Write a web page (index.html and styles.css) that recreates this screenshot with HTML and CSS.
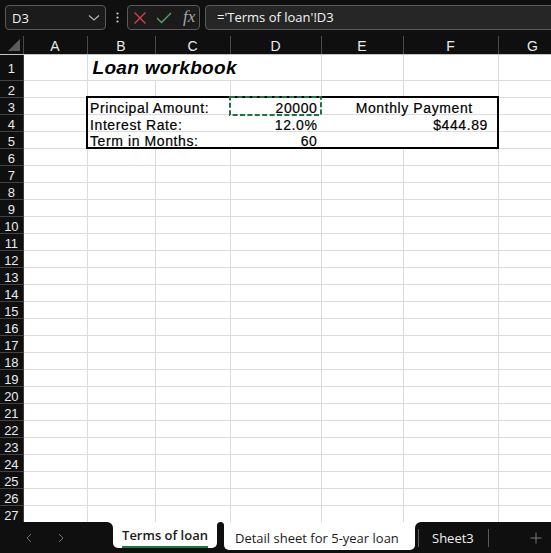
FILE: index.html
```html
<!DOCTYPE html>
<html>
<head>
<meta charset="utf-8">
<title>Loan workbook</title>
<link rel="stylesheet" href="styles.css">
</head>
<body>
<div class="app">
  <div class="toolbar">
    <div class="namebox">
      <span>D3</span>
      <svg class="chev" width="12" height="8" viewBox="0 0 12 8"><polyline points="1,1.5 6,6 11,1.5" fill="none" stroke="#b5b5b5" stroke-width="1.2"/></svg>
    </div>
    <div class="kebab">
      <svg width="21" height="25" viewBox="0 0 21 25"><circle cx="11.5" cy="8.5" r="1.1" fill="#d0d0d0"/><circle cx="11.5" cy="12.5" r="1.1" fill="#d0d0d0"/><circle cx="11.5" cy="16.5" r="1.1" fill="#d0d0d0"/></svg>
    </div>
    <div class="fxbox">
      <svg class="ico-x" width="14" height="14" viewBox="0 0 14 14"><path d="M1.5 1.5 L12.5 12.5 M12.5 1.5 L1.5 12.5" stroke="#d9414a" stroke-width="1.3" fill="none"/></svg>
      <svg class="ico-ok" width="16" height="12" viewBox="0 0 16 12"><polyline points="1,6 5.5,10.5 15,1" fill="none" stroke="#4fa866" stroke-width="1.3"/></svg>
      <span class="fx">fx</span>
    </div>
    <div class="formula">='Terms of loan'!D3</div>
  </div>

  <div class="gridwrap">
    <table class="sheet">
      <colgroup>
        <col class="w-rh"><col class="w-a"><col class="w-b"><col class="w-c"><col class="w-d"><col class="w-e"><col class="w-f"><col class="w-g">
      </colgroup>
      <thead>
        <tr class="hrow">
          <th class="corner"><svg width="22" height="17" viewBox="0 0 22 17"><polygon points="20,3 20,15 8,15" fill="#5c5c5c"/></svg></th>
          <th>A</th><th>B</th><th>C</th><th>D</th><th>E</th><th>F</th><th>G</th>
        </tr>
      </thead>
      <tbody>
        <tr class="r1"><th>1</th><td></td><td class="title nr">Loan workbook</td><td class="nr"></td><td></td><td></td><td></td><td></td></tr>
        <tr><th>2</th><td></td><td></td><td></td><td></td><td></td><td></td><td></td></tr>
        <tr><th>3</th><td></td><td class="bl bt nr">Principal Amount:</td><td class="bt nr"></td><td class="bt num nr sel">20000<svg class="ants" width="93" height="20" viewBox="0 0 93 20"><rect x="1" y="1" width="91" height="18" fill="none" stroke="#1f7244" stroke-width="2" stroke-dasharray="5 2.4"/></svg></td><td class="bt br ctr" colspan="2">Monthly Payment</td><td></td></tr>
        <tr><th>4</th><td></td><td class="bl nr">Interest Rate:</td><td class="nr"></td><td class="num nr">12.0%</td><td class="nr"></td><td class="num money br">$444.89</td><td></td></tr>
        <tr><th>5</th><td></td><td class="bl bb nr">Term in Months:</td><td class="bb nr"></td><td class="bb num nr">60</td><td class="bb nr"></td><td class="bb br"></td><td></td></tr>
        <tr><th>6</th><td></td><td></td><td></td><td></td><td></td><td></td><td></td></tr>
        <tr><th>7</th><td></td><td></td><td></td><td></td><td></td><td></td><td></td></tr>
        <tr><th>8</th><td></td><td></td><td></td><td></td><td></td><td></td><td></td></tr>
        <tr><th>9</th><td></td><td></td><td></td><td></td><td></td><td></td><td></td></tr>
        <tr><th>10</th><td></td><td></td><td></td><td></td><td></td><td></td><td></td></tr>
        <tr><th>11</th><td></td><td></td><td></td><td></td><td></td><td></td><td></td></tr>
        <tr><th>12</th><td></td><td></td><td></td><td></td><td></td><td></td><td></td></tr>
        <tr><th>13</th><td></td><td></td><td></td><td></td><td></td><td></td><td></td></tr>
        <tr><th>14</th><td></td><td></td><td></td><td></td><td></td><td></td><td></td></tr>
        <tr><th>15</th><td></td><td></td><td></td><td></td><td></td><td></td><td></td></tr>
        <tr><th>16</th><td></td><td></td><td></td><td></td><td></td><td></td><td></td></tr>
        <tr><th>17</th><td></td><td></td><td></td><td></td><td></td><td></td><td></td></tr>
        <tr><th>18</th><td></td><td></td><td></td><td></td><td></td><td></td><td></td></tr>
        <tr><th>19</th><td></td><td></td><td></td><td></td><td></td><td></td><td></td></tr>
        <tr><th>20</th><td></td><td></td><td></td><td></td><td></td><td></td><td></td></tr>
        <tr><th>21</th><td></td><td></td><td></td><td></td><td></td><td></td><td></td></tr>
        <tr><th>22</th><td></td><td></td><td></td><td></td><td></td><td></td><td></td></tr>
        <tr><th>23</th><td></td><td></td><td></td><td></td><td></td><td></td><td></td></tr>
        <tr><th>24</th><td></td><td></td><td></td><td></td><td></td><td></td><td></td></tr>
        <tr><th>25</th><td></td><td></td><td></td><td></td><td></td><td></td><td></td></tr>
        <tr><th>26</th><td></td><td></td><td></td><td></td><td></td><td></td><td></td></tr>
        <tr><th>27</th><td></td><td></td><td></td><td></td><td></td><td></td><td></td></tr>
      </tbody>
    </table>
  </div>

  <div class="tabbar">
    <div class="nav">
      <svg width="113" height="31" viewBox="0 0 113 31"><polyline points="31,12 27,16 31,20" fill="none" stroke="#707070" stroke-width="1"/><polyline points="59,12 63,16 59,20" fill="none" stroke="#707070" stroke-width="1"/></svg>
    </div>
    <div class="tab tab-active"><span class="tab-label">Terms of loan</span></div>
    <div class="tabgap"></div>
    <div class="tab tab-second">Detail sheet for 5-year loan</div>
    <div class="rest">
      <span class="vsep"></span>
      <span class="tab-dark">Sheet3</span>
      <span class="vsep"></span>
      <svg class="plus" width="12" height="12" viewBox="0 0 12 12"><path d="M6 0.5 V11.5 M0.5 6 H11.5" stroke="#7a7a7a" stroke-width="1" fill="none"/></svg>
    </div>
  </div>
</div>
</body>
</html>
```

FILE: styles.css
```css
* { box-sizing: border-box; }

html, body {
  margin: 0;
  padding: 0;
  background: #0f0f0f;
}

body {
  width: 551px;
  height: 553px;
  overflow: hidden;
}

.app {
  display: flex;
  flex-direction: column;
  width: 551px;
  height: 553px;
}

/* ---------- formula bar ---------- */
.toolbar {
  flex: none;
  height: 36px;
  display: flex;
  align-items: flex-start;
  padding: 5px 0 0 5px;
  background: #0f0f0f;
  font-family: "Open Sans", "Noto Sans", sans-serif;
  font-size: 13px;
  color: #f2f2f2;
}

.namebox {
  width: 101px;
  height: 25px;
  border: 1px solid #5a5a5a;
  border-radius: 4px;
  background: #1b1b1b;
  display: flex;
  align-items: center;
  justify-content: space-between;
  padding: 0 5px 0 6px;
}

.chev { display: block; margin-top: 1px; }

.kebab {
  width: 21px;
  height: 25px;
}
.kebab svg { display: block; }

.fxbox {
  width: 73px;
  height: 25px;
  border: 1px solid #5a5a5a;
  border-radius: 4px;
  background: #1b1b1b;
  display: flex;
  align-items: center;
  padding-left: 5px;
}
.ico-x { display: block; margin-right: 9px; }
.ico-ok { display: block; margin-right: 11px; }
.fx {
  font-family: "Liberation Serif", "DejaVu Serif", serif;
  font-style: italic;
  font-size: 17px;
  color: #a8a8a8;
  line-height: 1;
  margin-top: -2px;
}

.formula {
  flex: 1;
  margin-left: 5px;
  margin-right: -8px;
  height: 25px;
  border: 1px solid #5a5a5a;
  border-radius: 4px;
  background: #262626;
  padding-left: 11px;
  line-height: 23px;
  white-space: nowrap;
  color: #f4f4f4;
}

/* ---------- grid ---------- */
.gridwrap {
  flex: 1;
  overflow: hidden;
  background: #fff;
  min-height: 0;
}

.sheet {
  border-collapse: collapse;
  table-layout: fixed;
  width: 567px;
  font-family: "Liberation Sans", Arial, sans-serif;
}

.w-rh { width: 23px; }
.w-a { width: 64px; }
.w-b { width: 68px; }
.w-c { width: 75px; }
.w-d { width: 91px; }
.w-e { width: 82px; }
.w-f { width: 95px; }
.w-g { width: 69px; }

.sheet th {
  background: #0f0f0f;
  color: #e8eaef;
  font-weight: normal;
  padding: 0;
  text-align: center;
}

.hrow th {
  height: 18px;
  font-size: 14px;
  line-height: 14px;
  vertical-align: bottom;
  padding-bottom: 1px;
  border-right: 1px solid #4a4a4a;
  border-bottom: 1px solid #c4c4c4;
}
.hrow th.corner { padding: 0; vertical-align: top; }
.hrow th.corner svg { display: block; }

tbody tr { height: 17px; }
tbody tr.r1 { height: 26px; }

tbody th {
  font-size: 13px;
  line-height: 13px;
  vertical-align: bottom;
  padding-bottom: 1px;
  border-bottom: 1px solid #434343;
  border-right: 1px solid #3a3a3a;
  letter-spacing: -0.3px;
}
tbody tr.r1 th { padding-bottom: 5px; }

.sheet td {
  border: 1px solid #dcdcdc;
  padding: 0 2px;
  font-size: 14px;
  line-height: 12px;
  letter-spacing: 0.6px;
  -webkit-text-stroke: 0.2px #000;
  color: #000;
  vertical-align: bottom;
  white-space: nowrap;
  overflow: visible;
}

.sheet td.title {
  font-size: 19px;
  line-height: 19px;
  font-weight: bold;
  font-style: italic;
  letter-spacing: 0.3px;
  padding-left: 5px;
  padding-bottom: 3px;
  -webkit-text-stroke: 0;
}

.sheet td.nr { border-right-color: transparent; }
.sheet td.bl { border-left: 2px solid #000; }
.sheet td.br { border-right: 2px solid #000; }
.sheet td.bt { border-top: 2px solid #000; }
.sheet td.bb { border-bottom: 2px solid #000; }

.sheet td.num { text-align: right; padding-right: 3px; }
.sheet td.money { padding-right: 9px; }
.sheet td.ctr { text-align: center; padding-left: 12px; }

.sheet td.sel { position: relative; }
.ants {
  position: absolute;
  left: -2px;
  top: -2px;
  pointer-events: none;
}

/* ---------- sheet tabs ---------- */
.tabbar {
  flex: none;
  height: 31px;
  display: flex;
  align-items: flex-start;
  background: linear-gradient(#ffffff 0 12px, #0f0f0f 12px);
  font-family: "Open Sans", "Noto Sans", sans-serif;
  font-size: 13px;
}

.nav {
  width: 113px;
  height: 31px;
  background: #0f0f0f;
  border-top-right-radius: 6px;
}
.nav svg { display: block; }

.tab {
  background: #fff;
  color: #1b1b1b;
  border-radius: 0 0 5px 5px;
  white-space: nowrap;
}

.tab-active {
  width: 104px;
  height: 26px;
  display: flex;
  justify-content: center;
  padding-top: 4px;
}
.tab-label {
  display: inline-block;
  line-height: 18px;
  font-weight: 600;
  border-bottom: 2px solid #1d7a45;
}

.tabgap {
  width: 7px;
  height: 31px;
  background: #0f0f0f;
  border-radius: 4px 4px 0 0;
}

.tab-second {
  width: 191px;
  height: 28px;
  padding: 7px 0 0 11px;
  line-height: 18px;
}

.rest {
  flex: 1;
  height: 31px;
  background: #0f0f0f;
  border-top-left-radius: 6px;
  display: flex;
  align-items: flex-start;
  padding-left: 3px;
}
.vsep {
  width: 1px;
  height: 18px;
  margin-top: 7px;
  background: #5a5a5a;
}
.tab-dark {
  color: #f2f2f2;
  line-height: 18px;
  padding-top: 7px;
  margin: 0 14px 0 13px;
}
.plus {
  display: block;
  margin: 10px 0 0 41px;
}
```
